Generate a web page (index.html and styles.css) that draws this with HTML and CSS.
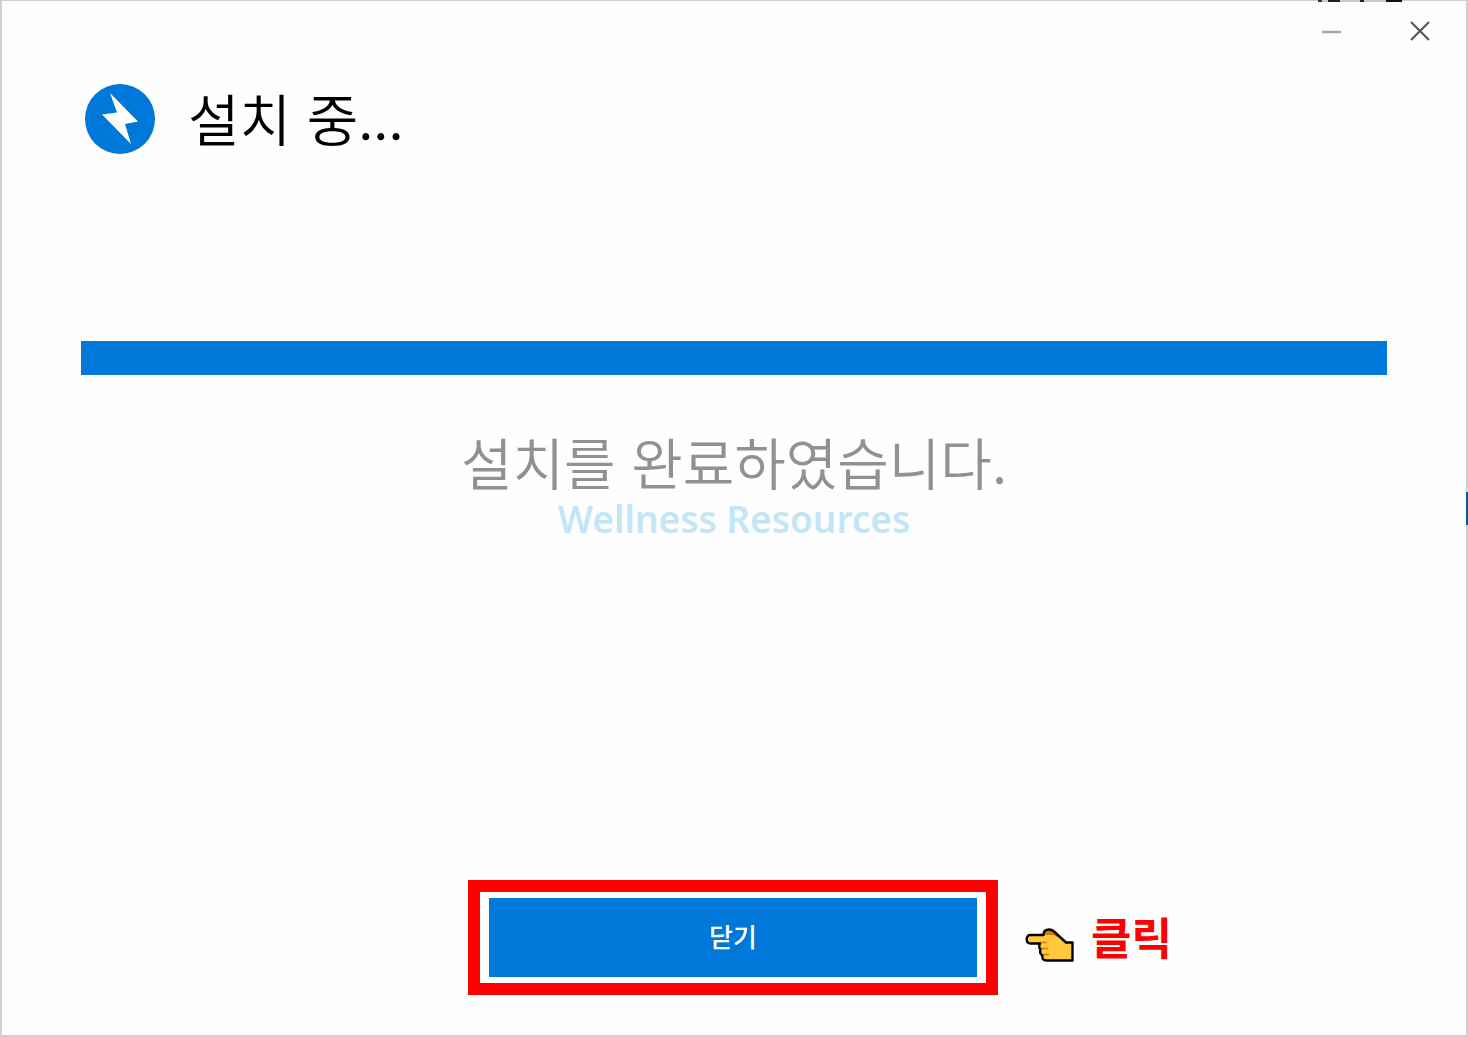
FILE: index.html
```html
<!DOCTYPE html>
<html lang="ko">
<head>
    <meta charset="UTF-8">
    <meta name="viewport" content="width=device-width, initial-scale=1.0">
    <title>설치 중...</title>
    <link rel="stylesheet" href="styles.css">
</head>
<body>
    <div class="installer">
        <!-- Window controls -->
        <div class="titlebar">
            <button type="button" class="window-btn" aria-label="최소화">
                <svg width="20" height="20" viewBox="0 0 20 20"><path d="M0 11H19" stroke="#a3a3a3" stroke-width="2.4"/></svg>
            </button>
            <button type="button" class="window-btn" aria-label="창 닫기">
                <svg width="20" height="20" viewBox="0 0 20 20"><path d="M1 1L19 19M19 1L1 19" stroke="#555" stroke-width="2.1"/></svg>
            </button>
        </div>

        <header class="header">
            <svg class="logo" viewBox="0 0 72 72" aria-hidden="true">
                <circle cx="36" cy="36" r="35" fill="#0078d9"/>
                <path d="M26 10L54 38.5L41 41L47 61L18 31.500L33 29.500Z" fill="#fff"/>
            </svg>
            <h1>설치 중...</h1>
        </header>

        <main class="content">
            <progress class="progress" value="100" max="100" aria-label="설치 진행률"></progress>
            <p class="message">설치를 완료하였습니다.</p>
            <p class="watermark">Wellness Resources</p>
        </main>

        <footer class="footer">
            <div class="highlight">
                <button type="button" class="close-btn">닫기</button>
            </div>
            <div class="hint">
                <svg class="hand" viewBox="0 0 50 36" aria-hidden="true">
                    <path d="M5 8H18.500C18.500 4 21 2.500 24 2.500C26 2.500 27.500 3.200 29 4.500L41 15.500H47.500V33.500H21.500C18 33.500 16.500 31 17.500 28.500C15 27 14.500 25 15.500 22.500C14 21 14 18.500 15 16.500H5.500C0.500 16.500 0.500 8 5 8Z" fill="#ffc83d"/>
                    <path d="M18.500 8C18.500 4 21 2.500 24 2.500C26 2.500 27.500 3.200 29 4.500L35 10C31 11 30 8 27 8Z" fill="#d67d00"/>
                    <path d="M15 15.500H22M16 21.500H23M18 27.500H24" stroke="#d67d00" stroke-width="1.300" fill="none"/>
                    <path d="M5 8H18.500C18.500 4 21 2.500 24 2.500C26 2.500 27.500 3.200 29 4.500L41 15.500H47.500V33.500H21.500C18 33.500 16.500 31 17.500 28.500C15 27 14.500 25 15.500 22.500C14 21 14 18.500 15 16.500H5.500C0.500 16.500 0.500 8 5 8Z" fill="none" stroke="#000" stroke-width="2.400" stroke-linejoin="round"/>
                </svg>
                <span>클릭</span>
            </div>
        </footer>

        <!-- Window behind, showing at the edges -->
        <div class="edge edge-top"></div>
        <div class="edge edge-right"></div>
    </div>
</body>
</html>
```

FILE: styles.css
```css
* {
    box-sizing: border-box;
}
body {
    margin: 0;
    font-family: "Noto Sans CJK KR", "Noto Sans", sans-serif;
    background: #fff;
}
h1, p {
    margin: 0;
    font-weight: 350;
}
button {
    border: none;
    padding: 0;
    font-family: inherit;
    cursor: pointer;
}
.installer {
    position: relative;
    display: flex;
    flex-direction: column;
    min-height: 100vh;
    background: #fefefe;
    border: 2px solid #d0d0d0;
    border-top-width: 1px;
}
.titlebar {
    display: flex;
    justify-content: flex-end;
    height: 60px;
    padding-right: 2px;
}
.window-btn {
    display: flex;
    align-items: center;
    justify-content: center;
    width: 88px;
    background: none;
}
.window-btn svg {
    display: block;
}
.header {
    display: flex;
    align-items: center;
    gap: 32px;
    height: 116px;
    padding: 0 82px;
}
.logo {
    width: 72px;
    height: 72px;
}
h1 {
    padding-bottom: 4px;
    font-size: 56px;
    line-height: 72px;
    color: #000;
}
.content {
    flex: 1;
    padding: 164px 79px 0;
    text-align: center;
}
.progress {
    display: block;
    width: 100%;
    height: 34px;
    border: none;
    background: #e5e5e5;
    appearance: none;
}
.progress::-webkit-progress-bar {
    background: #e5e5e5;
}
.progress::-webkit-progress-value {
    background: #0078d9;
}
.message {
    margin-top: 50px;
    font-size: 56px;
    line-height: 72px;
    color: #919191;
}
.watermark {
    font-family: "Noto Sans", "Open Sans", sans-serif;
    font-size: 37px;
    font-weight: 600;
    line-height: 44px;
    color: #c2e6f6;
}
.footer {
    display: grid;
    grid-template-columns: 1fr 530px 1fr;
    align-items: center;
    padding: 0 2px 40px 0;
}
.highlight {
    grid-column: 2;
    padding: 6px 9px;
    border: 12px solid #f00;
    background: #fff;
}
.close-btn {
    display: block;
    width: 100%;
    height: 79px;
    padding-bottom: 4px;
    font-size: 26px;
    font-weight: 500;
    color: #fff;
    background: #0078d9;
}
.hint {
    display: flex;
    align-items: center;
    gap: 16px;
    padding: 0 0 4px 27px;
    font-size: 44px;
    font-weight: 700;
    line-height: 48px;
    color: #f00;
}
.hand {
    width: 50px;
    height: 36px;
    margin-top: 18px;
}
.edge {
    position: absolute;
}
.edge-top {
    top: -1px;
    right: 64px;
    width: 84px;
    height: 2px;
    background: linear-gradient(90deg, #333 4px, #ccc 4px 10px, #222 10px 22px, #ccc 22px 42px, #222 42px 46px, #ccc 46px 68px, #111 68px);
}
.edge-right {
    top: 491px;
    right: -2px;
    width: 2px;
    height: 33px;
    background: #0a55a0;
}
```
